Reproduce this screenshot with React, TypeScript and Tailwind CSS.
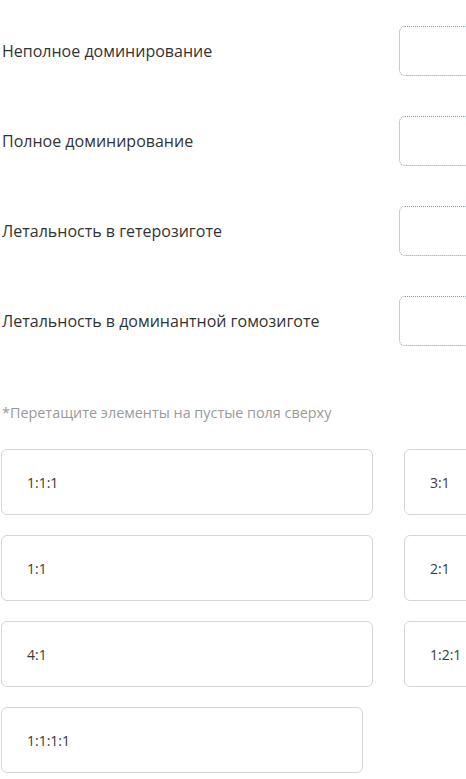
import React from "react";

const labels = [
  "Неполное доминирование",
  "Полное доминирование",
  "Летальность в гетерозиготе",
  "Летальность в доминантной гомозиготе",
];

const tiles: { t: string; w: string }[] = [
  { t: "1:1:1", w: "w-[372px]" },
  { t: "3:1", w: "w-[120px]" },
  { t: "1:1", w: "w-[372px]" },
  { t: "2:1", w: "w-[120px]" },
  { t: "4:1", w: "w-[372px]" },
  { t: "1:2:1", w: "w-[120px]" },
  { t: "1:1:1:1", w: "w-[362px]" },
];

export default function App() {
  return (
    <div className="w-[466px] h-[779px] overflow-hidden bg-white">
      <div className="w-[560px] pl-[2px] pt-[26px] flex flex-col">
        {labels.map((l) => (
          <div key={l} className="flex items-center h-[50px] mb-[40px]">
            <div
              className="w-[397px] text-[16px] text-[#333333] leading-none"
              style={{ fontFamily: "'Open Sans', 'Noto Sans', sans-serif" }}
            >
              {l}
            </div>
            <div className="w-[120px] h-[50px] rounded-[6px] border border-dotted border-[#7f9cb0]" />
          </div>
        ))}
        <div
          className="mt-[20px] text-[14.4px] text-[#9a9a9a] leading-none h-[14px]"
          style={{ fontFamily: "'Open Sans', 'Noto Sans', sans-serif" }}
        >
          *Перетащите элементы на пустые поля сверху
        </div>
        <div className="mt-[29px] -ml-[1px] flex flex-wrap gap-x-[31px] gap-y-[20px]">
          {tiles.map((t) => (
            <div
              key={t.t}
              className={`${t.w} h-[66px] rounded-[6px] border border-[#d6d6d6] flex items-center pl-[25px] text-[14px] text-[#3a3a3a]`}
              style={{ fontFamily: "'Open Sans', 'Noto Sans', sans-serif" }}
            >
              {t.t}
            </div>
          ))}
        </div>
      </div>
    </div>
  );
}
